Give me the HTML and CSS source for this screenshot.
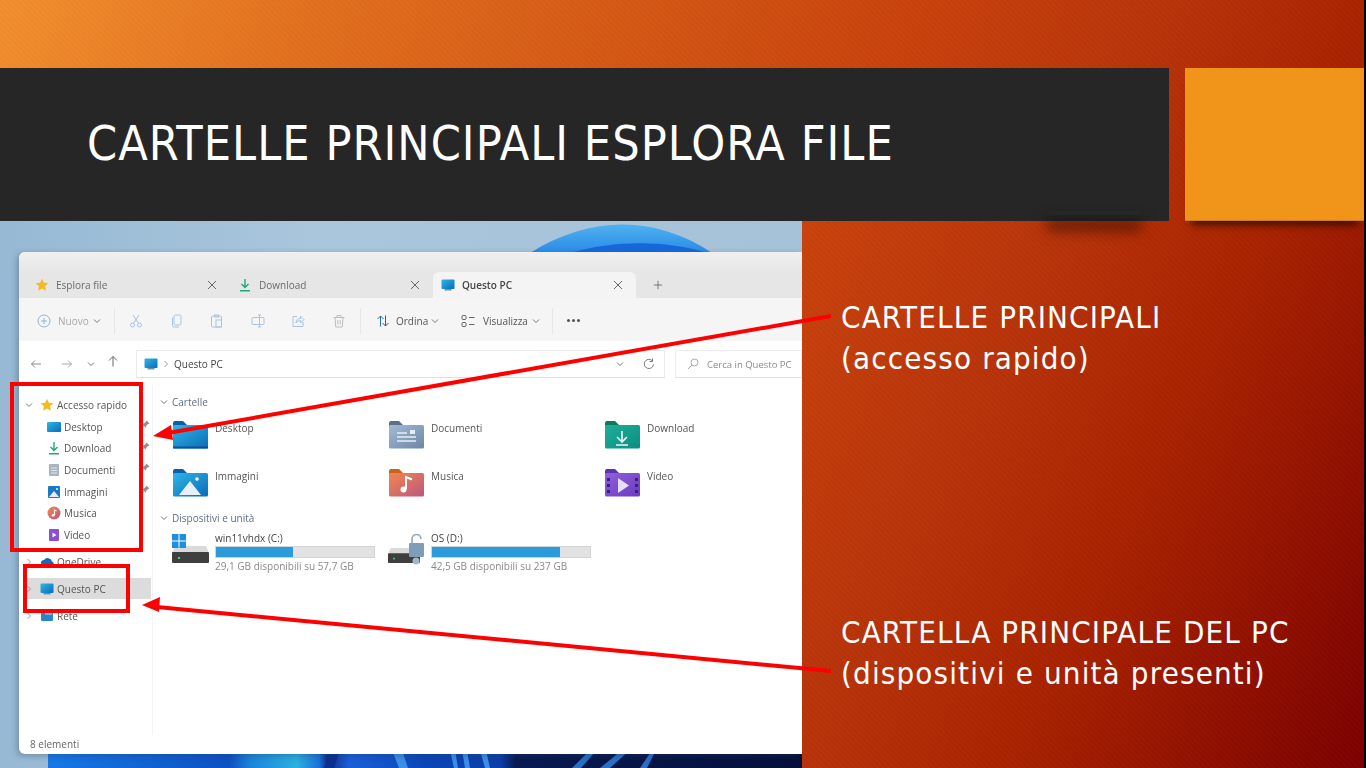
FILE: index.html
```html
<!DOCTYPE html>
<html lang="it">
<head>
    <meta charset="UTF-8">
    <meta name="viewport" content="width=device-width, initial-scale=1.0">
    <title>Cartelle principali Esplora file</title>
    <link rel="stylesheet" href="styles.css">
</head>
<body>
    <!-- shared icons -->
    <svg class="defs" width="0" height="0">
        <defs>
            <linearGradient id="g-blue" x1="0" y1="0" x2="1" y2="1"><stop offset="0" stop-color="#2fb6e6"/><stop offset="1" stop-color="#0a6cb8"/></linearGradient>
            <linearGradient id="g-slate" x1="0" y1="0" x2="1" y2="1"><stop offset="0" stop-color="#a3bad4"/><stop offset="1" stop-color="#6c87a6"/></linearGradient>
            <linearGradient id="g-green" x1="0" y1="0" x2="1" y2="1"><stop offset="0" stop-color="#1fae9a"/><stop offset="1" stop-color="#0b8d80"/></linearGradient>
            <linearGradient id="g-orange" x1="0" y1="0" x2="1" y2="1"><stop offset="0" stop-color="#f4854f"/><stop offset="1" stop-color="#b9587e"/></linearGradient>
            <linearGradient id="g-purple" x1="0" y1="0" x2="1" y2="1"><stop offset="0" stop-color="#8f5fdc"/><stop offset="1" stop-color="#6c3bc0"/></linearGradient>
            <linearGradient id="g-wall" x1="0" y1="0" x2="1" y2="0">
                <stop offset="0" stop-color="#1678e6"/><stop offset="0.24" stop-color="#0c50c4"/>
                <stop offset="0.27" stop-color="#1c86dc"/><stop offset="0.33" stop-color="#2cb0e0"/><stop offset="0.36" stop-color="#1a70d8"/>
                <stop offset="0.37" stop-color="#0b2f86"/><stop offset="0.4" stop-color="#1a5fd8"/><stop offset="0.5" stop-color="#0a46b8"/>
                <stop offset="0.6" stop-color="#0c3ea8"/><stop offset="0.62" stop-color="#071a52"/><stop offset="1" stop-color="#050f3a"/>
            </linearGradient>
            <linearGradient id="g-peak" x1="0" y1="0" x2="0" y2="1"><stop offset="0" stop-color="#4fb2ee"/><stop offset="1" stop-color="#2a8ae8"/></linearGradient>
            <symbol id="i-star" viewBox="0 0 14 14"><path fill="#f5b921" d="M7 .8l1.9 4 4.4.5-3.300 3 .9 4.400L7 10.500l-3.900 2.200.9-4.400-3.300-3 4.400-.5z"/></symbol>
            <symbol id="i-pc" viewBox="0 0 14 14"><rect x="3.500" y="11" width="7" height="1.500" fill="#6f8fa6"/><rect x=".5" y="1.500" width="13" height="9.500" rx="1" fill="url(#g-blue)"/></symbol>
            <symbol id="i-down" viewBox="0 0 14 14"><path fill="none" stroke="#1fa67f" stroke-width="1.400" d="M7 1v8.500M3.500 6L7 9.500 10.500 6M2 12.700h10"/></symbol>
            <symbol id="i-x" viewBox="0 0 12 12"><path fill="none" stroke="#666" stroke-width="1" d="M2 2l8 8M10 2l-8 8"/></symbol>
            <symbol id="i-chev" viewBox="0 0 8 8"><path fill="none" stroke="#777" stroke-width="1" d="M1 2.500L4 5.500 7 2.500"/></symbol>
            <symbol id="i-right" viewBox="0 0 8 8"><path fill="none" stroke="#999" stroke-width="1" d="M2.500 1L5.500 4 2.500 7"/></symbol>
            <symbol id="i-pin" viewBox="0 0 9 9"><path fill="#8e8e8e" d="M5.500.5l3 3-1.800.8-1.400 1.400-.5 2L1 3.900l2-.5 1.700-1.400z"/><path stroke="#8e8e8e" d="M2.500 6.500L.5 8.500"/></symbol>
            <symbol id="i-tab" viewBox="0 0 36 29"><path fill="#0f5fa8" d="M1 3a2 2 0 0 1 2-2h8l4 4h19v8H1z"/></symbol>
            <symbol id="i-drive" viewBox="0 0 37 17" preserveAspectRatio="none"><path fill="#dadada" d="M3 0h31l3 7H0z"/><rect y="6" width="37" height="11" rx="1" fill="#3f3f3f"/><rect x="6" y="11" width="2" height="2" fill="#3fd26a"/></symbol>
        </defs>
    </svg>

    <div class="slide">
        <header class="head">
            <div class="title-bar"><h1>CARTELLE PRINCIPALI ESPLORA FILE</h1></div>
            <div class="accent"></div>
        </header>

        <main class="main">
            <div class="shot">
                <svg class="wallpaper" viewBox="0 0 802 547" preserveAspectRatio="none">
                    <path fill="url(#g-peak)" d="M530 32C590 -6 656 -6 712 32z"/>
                    <path fill="#1568dc" d="M570 32C615 19 665 19 708 32z"/>
                    <rect x="48" y="525" width="754" height="22" fill="url(#g-wall)"/>
                    <path fill="#0a2f8e" d="M324 547l8-18h8l-6 18z"/>
                    <path fill="#3c8fe8" d="M392 529h10l6 18h-9zM450 529h5l3 18h-4zM462 529h5l3 18h-5zM480 529h6l4 18h-5z"/>
                    <path fill="#2a6fc4" d="M572 547l18-18h7l-16 18zM600 547l22-18h8l-20 18zM640 547l12-18h4l-9 18z"/>
                </svg>
                <div class="window">
                    <div class="tabs">
                        <div class="tab">
                            <svg class="ico"><use href="#i-star"/></svg><span>Esplora file</span>
                            <svg class="close"><use href="#i-x"/></svg>
                        </div>
                        <div class="tab">
                            <svg class="ico"><use href="#i-down"/></svg><span>Download</span>
                            <svg class="close"><use href="#i-x"/></svg>
                        </div>
                        <div class="tab tab-active">
                            <svg class="ico"><use href="#i-pc"/></svg><span>Questo PC</span>
                            <svg class="close"><use href="#i-x"/></svg>
                        </div>
                        <svg class="tab-plus" viewBox="0 0 12 12"><path fill="none" stroke="#666" d="M6 1v10M1 6h10"/></svg>
                    </div>

                    <div class="toolbar">
                        <div class="tool tool-new faded">
                            <svg class="tool-ico" viewBox="0 0 14 14"><circle cx="7" cy="7" r="6" fill="none" stroke="#8fb4d8"/><path stroke="#8fb4d8" d="M7 4v6M4 7h6"/></svg>
                            <span>Nuovo</span>
                            <svg class="chev"><use href="#i-chev"/></svg>
                        </div>
                        <i class="sep"></i>
                        <div class="tool-icons">
                            <svg class="tool-ico" viewBox="0 0 14 14"><g fill="none" stroke="#a9c4de"><circle cx="3.500" cy="11" r="2"/><circle cx="10.500" cy="11" r="2"/><path d="M4.500 9.500L10 1M9.500 9.500L4 1"/></g></svg>
                            <svg class="tool-ico" viewBox="0 0 14 14"><g fill="none" stroke="#a9c4de"><rect x="4" y="1" width="7" height="10" rx="1.500"/><path d="M2.500 3.500v8a1.500 1.500 0 0 0 1.500 1.500h5"/></g></svg>
                            <svg class="tool-ico" viewBox="0 0 14 14"><g fill="none" stroke="#a9c4de"><rect x="1.500" y="2" width="10" height="11" rx="1"/><rect x="6" y="6" width="5.500" height="7"/><rect x="4.500" y="1" width="4" height="2"/></g></svg>
                            <svg class="tool-ico" viewBox="0 0 14 14"><g fill="none" stroke="#a9c4de"><rect x="1" y="3.500" width="12" height="7" rx="1"/><path d="M8.500 1v12M7 1h3M7 13h3"/></g></svg>
                            <svg class="tool-ico" viewBox="0 0 14 14"><g fill="none" stroke="#a9c4de"><path d="M6 2.500H2v10h10V8"/><path d="M5 9c0-3 2-4.500 4.500-4.500V2l3.500 3.500L9.500 9V6.500C7.500 6.500 6 7.500 5 9z"/></g></svg>
                            <svg class="tool-ico" viewBox="0 0 14 14"><g fill="none" stroke="#bdbdbd"><path d="M1.500 3.500h11M3 3.500l.7 9.500h6.600l.7-9.500M5 3.500V1.500h4v2M5.800 6v4.500M8.200 6v4.500"/></g></svg>
                        </div>
                        <i class="sep"></i>
                        <div class="tool tool-sort">
                            <svg class="tool-ico" viewBox="0 0 14 14"><path fill="none" stroke="#2a6fb0" d="M4.500 12.500V2M1.500 5l3-3 3 3"/><path fill="none" stroke="#555" d="M9.500 1.500V12M6.500 9l3 3 3-3"/></svg>
                            <span>Ordina</span>
                            <svg class="chev"><use href="#i-chev"/></svg>
                        </div>
                        <div class="tool tool-view">
                            <svg class="tool-ico" viewBox="0 0 14 14"><g fill="none" stroke="#666"><rect x="1" y="1.500" width="4" height="4" rx="1"/><rect x="1" y="8.500" width="4" height="4" rx="1"/><path stroke="#2a6fb0" d="M8 3.500h5.500"/><path d="M8 10.500h5.500"/></g></svg>
                            <span>Visualizza</span>
                            <svg class="chev"><use href="#i-chev"/></svg>
                        </div>
                        <i class="sep"></i>
                        <div class="dots"><b></b><b></b><b></b></div>
                    </div>

                    <div class="addr-row">
                        <div class="nav">
                            <svg class="nav-ico" viewBox="0 0 12 12"><path fill="none" stroke="#888" d="M11 6H1.500M5 2.500L1.500 6 5 9.500"/></svg>
                            <svg class="nav-ico" viewBox="0 0 12 12"><path fill="none" stroke="#aaa" d="M1 6h9.500M7 2.500L10.500 6 7 9.500"/></svg>
                            <svg class="chev"><use href="#i-chev"/></svg>
                            <svg class="nav-ico nav-up" viewBox="0 0 12 12"><path fill="none" stroke="#666" d="M6 11.500V1.500M2 5.500l4-4 4 4"/></svg>
                        </div>
                        <div class="addr">
                            <svg class="ico"><use href="#i-pc"/></svg>
                            <svg class="crumb"><use href="#i-right"/></svg>
                            <span>Questo PC</span>
                            <svg class="chev addr-chev"><use href="#i-chev"/></svg>
                            <svg class="nav-ico" viewBox="0 0 12 12"><path fill="none" stroke="#777" d="M10.500 6.500A4.600 4.600 0 1 1 9 2.500M9.500.5v3h-3"/></svg>
                        </div>
                        <div class="search">
                            <svg class="nav-ico" viewBox="0 0 12 12"><g fill="none" stroke="#aaa"><circle cx="7.500" cy="4.500" r="3.500"/><path d="M5 7l-4 4"/></g></svg>
                            <span>Cerca in Questo PC</span>
                        </div>
                    </div>

                    <div class="body">
                        <nav class="sidebar">
                            <div class="group">
                                <div class="row row-top"><svg class="row-chev"><use href="#i-chev"/></svg><svg class="ico"><use href="#i-star"/></svg><span>Accesso rapido</span></div>
                                <div class="row row-sub">
                                    <svg class="ico" viewBox="0 0 14 14"><rect y="2" width="14" height="10" rx="1" fill="url(#g-blue)"/></svg><span>Desktop</span>
                                    <svg class="pin"><use href="#i-pin"/></svg>
                                </div>
                                <div class="row row-sub">
                                    <svg class="ico"><use href="#i-down"/></svg><span>Download</span>
                                    <svg class="pin"><use href="#i-pin"/></svg>
                                </div>
                                <div class="row row-sub">
                                    <svg class="ico" viewBox="0 0 14 14"><rect x="2" y="1" width="10" height="12" rx="1" fill="#a9b4bf"/><path stroke="#dfe5ea" d="M4 5h6M4 7.500h6M4 10h6"/></svg><span>Documenti</span>
                                    <svg class="pin"><use href="#i-pin"/></svg>
                                </div>
                                <div class="row row-sub">
                                    <svg class="ico" viewBox="0 0 14 14"><rect x="1" y="1" width="12" height="12" rx="1" fill="#1b78c8"/><path fill="#e4eef8" d="M2 12l5-6 5 6z"/><circle cx="10" cy="4" r="1" fill="#fff"/></svg><span>Immagini</span>
                                    <svg class="pin"><use href="#i-pin"/></svg>
                                </div>
                                <div class="row row-sub">
                                    <svg class="ico" viewBox="0 0 14 14"><circle cx="7" cy="7" r="6.500" fill="url(#g-orange)"/><path fill="none" stroke="#fff" stroke-width="1.200" d="M7.500 9V4l2 1"/><circle cx="6.200" cy="9.300" r="1.400" fill="#fff"/></svg><span>Musica</span>
                                </div>
                                <div class="row row-sub">
                                    <svg class="ico" viewBox="0 0 14 14"><rect x="2" y="1" width="10" height="12" rx="1" fill="#8b4fd0"/><path fill="#fff" d="M5.500 4.500l4 2.500-4 2.500z"/></svg><span>Video</span>
                                </div>
                            </div>
                            <div class="row row-top"><svg class="row-chev"><use href="#i-right"/></svg><svg class="ico" viewBox="0 0 14 14"><path fill="#0f6cbd" d="M4 11a3 3 0 0 1 0-6 4.500 4.500 0 0 1 8 1.500A2.300 2.300 0 0 1 12 11z"/></svg><span>OneDrive</span></div>
                            <div class="row row-top row-current"><svg class="row-chev"><use href="#i-right"/></svg><svg class="ico"><use href="#i-pc"/></svg><span>Questo PC</span></div>
                            <div class="row row-top"><svg class="row-chev"><use href="#i-right"/></svg><svg class="ico" viewBox="0 0 14 14"><rect x="1" y="3" width="12" height="9" rx="1" fill="#2a86c8"/><rect x="5" y="1" width="7" height="5" fill="#6fb6e0"/></svg><span>Rete</span></div>
                        </nav>

                        <section class="content">
                            <div class="sect-head"><svg class="chev"><use href="#i-chev"/></svg><span>Cartelle</span></div>
                            <div class="folders">
                                <div class="folder">
                                    <svg class="folder-ico" viewBox="0 0 36 29"><use href="#i-tab"/><rect x="1" y="5" width="35" height="23.500" rx="1.500" fill="url(#g-blue)"/><rect x="1" y="26.500" width="35" height="2" fill="#0b4f96"/></svg>
                                    <span>Desktop</span>
                                </div>
                                <div class="folder">
                                    <svg class="folder-ico" viewBox="0 0 36 29"><path fill="#5d6f86" d="M1 3a2 2 0 0 1 2-2h8l4 4h19v8H1z"/><rect x="1" y="5" width="35" height="23.500" rx="1.500" fill="url(#g-slate)"/><path stroke="#e6edf5" stroke-width="1.500" d="M9 13h10M9 17h19M9 21h19"/><rect x="22" y="10" width="5" height="4" fill="#e6edf5"/></svg>
                                    <span>Documenti</span>
                                </div>
                                <div class="folder">
                                    <svg class="folder-ico" viewBox="0 0 36 29"><path fill="#0b7a5e" d="M1 3a2 2 0 0 1 2-2h8l4 4h19v8H1z"/><rect x="1" y="5" width="35" height="23.500" rx="1.500" fill="url(#g-green)"/><path fill="none" stroke="#eafaf6" stroke-width="1.600" d="M18 11v11M13 17l5 5 5-5M12 25h12"/></svg>
                                    <span>Download</span>
                                </div>
                                <div class="folder">
                                    <svg class="folder-ico" viewBox="0 0 36 29"><use href="#i-tab"/><rect x="1" y="5" width="35" height="23.500" rx="1.500" fill="url(#g-blue)"/><path fill="#e8eff8" d="M7 27l11-14 11 14z"/><circle cx="25" cy="11" r="1.800" fill="#fff"/></svg>
                                    <span>Immagini</span>
                                </div>
                                <div class="folder">
                                    <svg class="folder-ico" viewBox="0 0 36 29"><path fill="#c8641e" d="M1 3a2 2 0 0 1 2-2h8l4 4h19v8H1z"/><rect x="1" y="5" width="35" height="23.500" rx="1.500" fill="url(#g-orange)"/><path fill="none" stroke="#fff" stroke-width="2" d="M18 21V9l6 2.500"/><circle cx="15.500" cy="21.500" r="3" fill="#fff"/></svg>
                                    <span>Musica</span>
                                </div>
                                <div class="folder">
                                    <svg class="folder-ico" viewBox="0 0 36 29"><path fill="#5a34a8" d="M1 3a2 2 0 0 1 2-2h8l4 4h19v8H1z"/><rect x="1" y="5" width="35" height="23.500" rx="1.500" fill="url(#g-purple)"/><path fill="#e7dcfa" d="M14 10l11 7.500L14 25z"/><path fill="#3a1f7c" d="M3 10h3v3H3zM3 16h3v3H3zM3 22h3v3H3zM31 10h3v3h-3zM31 16h3v3h-3zM31 22h3v3h-3z"/></svg>
                                    <span>Video</span>
                                </div>
                            </div>

                            <div class="sect-head sect-drives"><svg class="chev"><use href="#i-chev"/></svg><span>Dispositivi e unità</span></div>
                            <div class="drives">
                                <div class="drive">
                                    <svg class="drive-ico" viewBox="0 0 37 32">
                                        <use href="#i-drive" y="12" width="37" height="17"/>
                                        <path fill="#1c8fe0" d="M0 0h6.500v6.500H0zM7.500 0H14v6.500H7.500zM0 7.500h6.500V14H0zM7.500 7.500H14V14H7.500z"/>
                                    </svg>
                                    <div class="drive-info">
                                        <div class="drive-name">win11vhdx (C:)</div>
                                        <div class="bar"><div class="bar-fill" style="width: 49%"></div></div>
                                        <div class="drive-free">29,1 GB disponibili su 57,7 GB</div>
                                    </div>
                                </div>
                                <div class="drive">
                                    <svg class="drive-ico" viewBox="0 0 37 32">
                                        <use href="#i-drive" y="14" width="32" height="15"/>
                                        <path fill="none" stroke="#8fa8bf" stroke-width="1.600" d="M24 9V5a4.500 4.500 0 0 1 9 0"/>
                                        <rect x="21" y="9" width="15" height="14" rx="1" fill="#7f9db8"/>
                                        <circle cx="28" cy="27" r="3.500" fill="#a4b6c8"/>
                                    </svg>
                                    <div class="drive-info">
                                        <div class="drive-name">OS (D:)</div>
                                        <div class="bar"><div class="bar-fill" style="width: 81%"></div></div>
                                        <div class="drive-free">42,5 GB disponibili su 237 GB</div>
                                    </div>
                                </div>
                            </div>
                        </section>
                    </div>

                    <footer class="status">8 elementi</footer>
                </div>
            </div>

            <aside class="notes">
                <p>CARTELLE PRINCIPALI<br>(accesso rapido)</p>
                <p>CARTELLA PRINCIPALE DEL PC<br>(dispositivi e unità presenti)</p>
            </aside>
        </main>

        <!-- red marks drawn over the slide -->
        <div class="mark mark-quick"></div>
        <div class="mark mark-pc"></div>
        <svg class="arrows" viewBox="0 0 1364 768">
            <path fill="none" stroke="#fe0000" stroke-width="4" d="M831 316L168 433M831 671L157 607"/>
            <path fill="#fe0000" d="M153 436l18-11 2 15zM142 605l18-8-1 15z"/>
        </svg>
    </div>
</body>
</html>
```

FILE: styles.css
```css
* {
    box-sizing: border-box;
}

body {
    margin: 0;
    background: #000;
    overflow: hidden;
}

.defs {
    position: absolute;
}

.slide {
    position: relative;
    width: 1364px;
    height: 768px;
    padding-top: 68px;
    overflow: hidden;
    display: flex;
    flex-direction: column;
    font-family: "DejaVu Sans", sans-serif;
    background:
        repeating-linear-gradient(45deg, rgba(255, 255, 255, 0.012) 0 2px, rgba(0, 0, 0, 0.012) 2px 4px),
        linear-gradient(116deg, #f28f2e 0%, #e2701e 18%, #c8420c 53%, #b8340a 67%, #a92300 79%, #7c0000 100%);
}

/* title band */
.head {
    display: flex;
    gap: 16px;
    height: 153px;
    flex: none;
}

.title-bar {
    position: relative;
    width: 1169px;
    background: #262626;
    display: flex;
    align-items: center;
    padding: 0 0 4px 87px;
}

.title-bar::after {
    content: '';
    position: absolute;
    right: 30px;
    bottom: 6px;
    width: 90px;
    height: 4px;
    box-shadow: 0 12px 14px 3px rgba(0, 0, 0, 0.55);
}

h1 {
    position: relative;
    margin: 0;
    color: #fff;
    font-weight: 400;
    font-size: 48px;
    font-stretch: condensed;
    letter-spacing: 1.05px;
    white-space: nowrap;
}

.accent {
    flex: 1;
    background: #f0951a;
    border-bottom: 1px solid #cf7d14;
    box-shadow: 0 10px 8px -6px rgba(0, 0, 0, 0.6);
}

.main {
    flex: 1;
    display: flex;
    min-height: 0;
}

/* the pasted screenshot */
.shot {
    position: relative;
    width: 802px;
    flex: none;
    overflow: hidden;
    padding: 31px 0 0 19px;
    background: linear-gradient(to right, #97b9d4, #a9c6dc 40%, #a6c2d8 100%);
}

.wallpaper {
    position: absolute;
    inset: 0;
    width: 100%;
    height: 100%;
}

.window {
    position: relative;
    width: 783px;
    height: 502px;
    display: flex;
    flex-direction: column;
    background: #fff;
    border-radius: 6px 0 0 6px;
    box-shadow: -2px 2px 6px rgba(40, 60, 90, 0.35);
    overflow: hidden;
    font-family: "Open Sans", sans-serif;
    font-size: 10px;
    color: #555;
    filter: blur(0.45px);
}

.ico {
    width: 14px;
    height: 14px;
    flex: none;
}

.chev {
    width: 8px;
    height: 8px;
    flex: none;
}

/* tabs */
.tabs {
    height: 46px;
    flex: none;
    display: flex;
    align-items: flex-end;
    padding-left: 8px;
    background: linear-gradient(#f0f0f0, #e6e6e6 45%, #e6e6e6);
}

.tab {
    width: 203px;
    height: 26px;
    display: flex;
    align-items: center;
    gap: 7px;
    padding: 0 12px 0 8px;
    color: #6a6a6a;
}

.tab-active {
    background: #f4f4f4;
    border-radius: 6px 6px 0 0;
    color: #444;
    font-weight: 600;
}

.close {
    width: 12px;
    height: 12px;
    margin-left: auto;
}

.tab-plus {
    width: 10px;
    height: 10px;
    margin: 0 0 8px 17px;
}

/* command bar */
.toolbar {
    height: 43px;
    flex: none;
    display: flex;
    align-items: center;
    padding: 2px 0 0 18px;
    background: #f5f5f5;
    color: #555;
}

.tool {
    display: flex;
    align-items: center;
    gap: 7px;
}

.tool .chev {
    margin-left: -3px;
}

.tool-ico {
    width: 14px;
    height: 14px;
    flex: none;
}

.faded {
    color: #a8a8a8;
}

.tool-new {
    width: 77px;
}

.sep {
    width: 1px;
    height: 26px;
    background: #e6e6e6;
}

.tool-icons {
    width: 245px;
    display: flex;
    justify-content: space-between;
    padding: 0 14px;
}

.tool-sort {
    width: 100px;
    gap: 6px;
    padding-left: 15px;
}

.tool-view {
    width: 91px;
    gap: 8px;
}

.tool-view .chev {
    margin-left: -4px;
}

.dots {
    display: flex;
    gap: 2px;
    margin-left: 14px;
}

.dots b {
    width: 3px;
    height: 3px;
    border-radius: 50%;
    background: #555;
}

/* address row */
.addr-row {
    height: 44px;
    flex: none;
    display: flex;
    align-items: center;
    gap: 10px;
    padding-top: 2px;
    background: #fff;
}

.nav {
    width: 107px;
    flex: none;
    display: flex;
    align-items: center;
    padding-left: 11px;
}

.nav-ico {
    width: 12px;
    height: 12px;
    flex: none;
}

.nav .nav-ico:nth-child(2) {
    margin-left: 19px;
}

.nav .chev {
    margin-left: 14px;
}

.nav-up {
    margin: 0 0 6px 12px;
}

.addr {
    width: 529px;
    height: 28px;
    flex: none;
    display: flex;
    align-items: center;
    padding: 0 9px 0 7px;
    border: 1px solid #ececec;
    border-bottom-color: #e0e0e0;
    color: #444;
}

.crumb {
    width: 8px;
    height: 8px;
    margin: 0 4px 0 4px;
}

.addr-chev {
    margin: 0 19px 0 auto;
}

.search {
    flex: 1;
    height: 28px;
    display: flex;
    align-items: center;
    gap: 8px;
    padding-left: 11px;
    border: 1px solid #ececec;
    border-bottom-color: #e0e0e0;
    color: #8a8a8a;
    font-size: 9.5px;
    white-space: nowrap;
}

/* body of the window */
.body {
    flex: 1;
    display: flex;
    min-height: 0;
}

.sidebar {
    width: 134px;
    flex: none;
    padding-top: 9px;
    border-right: 1px solid #f3f3f3;
}

.group {
    margin-bottom: 5px;
}

.row {
    height: 21.7px;
    display: flex;
    align-items: center;
    margin-right: 1px;
}

.sidebar > .row {
    height: 21.5px;
    margin-bottom: 5.5px;
}

.row-chev {
    width: 8px;
    height: 8px;
    flex: none;
    margin: 0 7px 0 6px;
}

.row-top .ico {
    margin-right: 3px;
}

.row-sub {
    padding-left: 28px;
}

.row-sub .ico {
    margin-right: 3px;
}

.sidebar .row-current {
    background: #dcdcdc;
    margin-left: 8px;
    margin-right: 1px;
}

.row-current .row-chev {
    margin-left: -2px;
}

.pin {
    width: 9px;
    height: 9px;
    margin: 0 1px 4px auto;
}

.content {
    flex: 1;
    padding: 9px 0 0 7px;
}

.sect-head {
    height: 16px;
    display: flex;
    align-items: center;
    gap: 4px;
    color: #5f6f88;
}

.folders {
    display: grid;
    grid-template-columns: repeat(3, 216px);
    grid-auto-rows: 48px;
    margin: 10px 0 0 12px;
}

.folder {
    display: flex;
    gap: 7px;
}

.folder-ico {
    width: 36px;
    height: 29px;
    flex: none;
}

.folder span {
    line-height: 14px;
    margin-top: 1px;
}

.sect-drives {
    margin-top: -6px;
}

.drives {
    display: grid;
    grid-template-columns: repeat(2, 216px);
    margin: 5px 0 0 12px;
}

.drive {
    display: flex;
    gap: 6px;
}

.drive-ico {
    width: 37px;
    height: 32px;
    flex: none;
    margin-top: 3px;
}

.drive-info {
    width: 160px;
}

.drive-name {
    height: 14px;
    line-height: 14px;
    color: #444;
}

.bar {
    height: 12px;
    margin-top: 1px;
    background: #e2e2e2;
    border: 1px solid #d4d4d4;
}

.bar-fill {
    height: 100%;
    background: #2b9bdb;
}

.drive-free {
    margin-top: 1px;
    line-height: 14px;
    color: #8a8a8a;
    white-space: nowrap;
}

.status {
    height: 19px;
    flex: none;
    padding-left: 11px;
    line-height: 19px;
    color: #666;
}

/* captions on the right */
.notes {
    position: relative;
    flex: 1;
    display: flex;
    flex-direction: column;
    gap: 233px;
    padding: 76px 0 0 39px;
    color: #fff;
    font-size: 31px;
    font-stretch: condensed;
    letter-spacing: 1.15px;
    line-height: 41px;
    white-space: nowrap;
}

.notes p {
    margin: 0;
}

/* red annotations */
.mark {
    position: absolute;
    border: 4px solid #fe0000;
}

.mark-quick {
    left: 10px;
    top: 382px;
    width: 133px;
    height: 170px;
}

.mark-pc {
    left: 23px;
    top: 564px;
    width: 107px;
    height: 49px;
}

.arrows {
    position: absolute;
    left: 0;
    top: 0;
    width: 1364px;
    height: 768px;
    pointer-events: none;
}
```
